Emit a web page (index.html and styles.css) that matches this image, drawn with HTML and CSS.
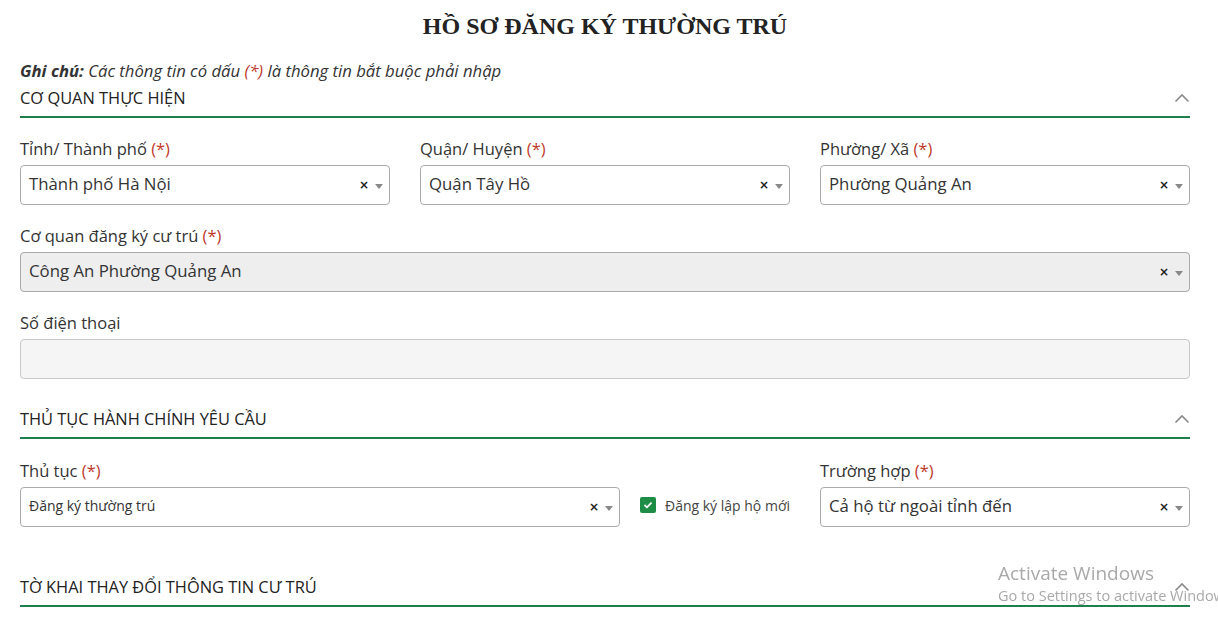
FILE: index.html
```html
<!DOCTYPE html>
<html lang="vi">
<head>
<meta charset="utf-8">
<title>Hồ sơ đăng ký thường trú</title>
<link rel="stylesheet" href="styles.css">
</head>
<body>
<div class="page">
  <h1 class="title">HỒ SƠ ĐĂNG KÝ THƯỜNG TRÚ</h1>
  <p class="note"><b>Ghi chú:</b> Các thông tin có dấu <span class="req">(*)</span> là thông tin bắt buộc phải nhập</p>

  <div class="section-head">
    <span>CƠ QUAN THỰC HIỆN</span>
    <svg class="chev" width="16" height="10" viewBox="0 0 16 10"><path d="M1.5 8.5 L8 2 L14.5 8.5" fill="none" stroke="#8a8a8a" stroke-width="1.6"/></svg>
  </div>

  <div class="grid3 first">
    <div class="field">
      <label class="label">Tỉnh/ Thành phố <span class="req">(*)</span></label>
      <div class="select"><span class="val">Thành phố Hà Nội</span><span class="clear">×</span><span class="arrow"></span></div>
    </div>
    <div class="field">
      <label class="label">Quận/ Huyện <span class="req">(*)</span></label>
      <div class="select"><span class="val">Quận Tây Hồ</span><span class="clear">×</span><span class="arrow"></span></div>
    </div>
    <div class="field">
      <label class="label">Phường/ Xã <span class="req">(*)</span></label>
      <div class="select"><span class="val">Phường Quảng An</span><span class="clear">×</span><span class="arrow"></span></div>
    </div>
  </div>

  <div class="field row">
    <label class="label">Cơ quan đăng ký cư trú <span class="req">(*)</span></label>
    <div class="select disabled"><span class="val">Công An Phường Quảng An</span><span class="clear">×</span><span class="arrow"></span></div>
  </div>

  <div class="field row">
    <label class="label">Số điện thoại</label>
    <div class="input"></div>
  </div>

  <div class="section-head s2">
    <span>THỦ TỤC HÀNH CHÍNH YÊU CẦU</span>
    <svg class="chev" width="16" height="10" viewBox="0 0 16 10"><path d="M1.5 8.5 L8 2 L14.5 8.5" fill="none" stroke="#8a8a8a" stroke-width="1.6"/></svg>
  </div>

  <div class="grid-proc">
    <div class="field">
      <label class="label">Thủ tục <span class="req">(*)</span></label>
      <div class="select"><span class="val small">Đăng ký thường trú</span><span class="clear">×</span><span class="arrow"></span></div>
    </div>
    <div class="check-col">
      <span class="checkbox"><svg width="10" height="8" viewBox="0 0 10 8"><path d="M1.5 4 L4 6.3 L8.5 1.6" fill="none" stroke="#fff" stroke-width="1.8"/></svg></span>
      <span class="check-text">Đăng ký lập hộ mới</span>
    </div>
    <div class="field">
      <label class="label">Trường hợp <span class="req">(*)</span></label>
      <div class="select"><span class="val">Cả hộ từ ngoài tỉnh đến</span><span class="clear">×</span><span class="arrow"></span></div>
    </div>
  </div>

  <div class="section-head s3">
    <span>TỜ KHAI THAY ĐỔI THÔNG TIN CƯ TRÚ</span>
    <svg class="chev" width="16" height="10" viewBox="0 0 16 10"><path d="M1.5 8.5 L8 2 L14.5 8.5" fill="none" stroke="#8a8a8a" stroke-width="1.6"/></svg>
  </div>
</div>

<div class="watermark">
  <div class="wm1">Activate Windows</div>
  <div class="wm2">Go to Settings to activate Windows.</div>
</div>
</body>
</html>
```

FILE: styles.css
```css
html, body {
  margin: 0;
  padding: 0;
  background: #fff;
  overflow: hidden;
}
body {
  font-family: "Open Sans", "Noto Sans", sans-serif;
  color: #333;
  font-size: 16px;
}
.page {
  width: 1170px;
  padding: 0 28px 0 20px;
}
.title {
  margin: 0;
  height: 50px;
  line-height: 52px;
  text-align: center;
  font-family: "Liberation Serif", "DejaVu Serif", serif;
  font-weight: bold;
  font-size: 24px;
  color: #222;
}
.note {
  margin: 10px 0 5px;
  line-height: 22px;
  font-size: 16.7px;
  font-style: italic;
  color: #333;
}
.note b {
  font-weight: 700;
}
.req {
  color: #c0392b;
}
.section-head {
  display: flex;
  justify-content: space-between;
  align-items: center;
  height: 22px;
  line-height: 22px;
  padding-bottom: 7px;
  border-bottom: 2px solid #1f7f4c;
  font-size: 16.4px;
  color: #222;
}
.section-head .chev {
  margin-right: 0;
}
.section-head.s2 { margin-top: 29px; }
.section-head.s3 { margin-top: 49px; }
.grid3 {
  display: grid;
  grid-template-columns: 370px 370px 370px;
  column-gap: 30px;
}
.first { margin-top: 20px; }
.field .label {
  display: block;
  height: 22px;
  line-height: 22px;
  margin-bottom: 5px;
  font-size: 16.5px;
  color: #333;
}
.row { margin-top: 20px; }
.select, .input {
  box-sizing: border-box;
  height: 40px;
  border: 1px solid #aaa;
  border-radius: 4px;
  background: #fff;
  display: flex;
  align-items: center;
  padding: 0 6px 3px 8px;
}
.select.disabled { background: #eee; }
.input { background: #f5f5f5; border-color: #c8c8c8; }
.val {
  flex: 1;
  font-size: 16.8px;
  color: #333;
  white-space: nowrap;
}
.val.small { font-size: 14px; }
.clear {
  font-weight: bold;
  font-size: 12px;
  color: #222;
  font-family: "DejaVu Sans", sans-serif;
  line-height: 1;
  margin-right: 6px;
  margin-top: 2px;
}
.arrow {
  width: 0;
  height: 0;
  border-left: 4px solid transparent;
  border-right: 4px solid transparent;
  border-top: 5px solid #888;
  margin-top: 5px;
}
.grid-proc {
  display: grid;
  grid-template-columns: 600px 200px 370px;
  margin-top: 21px;
}
.check-col {
  display: flex;
  align-items: center;
  padding-left: 20px;
  margin-top: 27px;
  height: 36px;
}
.checkbox {
  width: 16px;
  height: 16px;
  border-radius: 2px;
  background: #1e8e47;
  display: inline-flex;
  align-items: center;
  justify-content: center;
  margin-right: 9px;
}
.check-text {
  font-size: 14px;
  color: #444;
}
.watermark {
  position: fixed;
  left: 998px;
  top: 561px;
  color: #a9a9a9;
  font-family: "Open Sans", sans-serif;
  white-space: nowrap;
  pointer-events: none;
}
.wm1 { font-size: 19px; line-height: 24px; }
.wm2 { font-size: 14.5px; line-height: 22px; }
```
